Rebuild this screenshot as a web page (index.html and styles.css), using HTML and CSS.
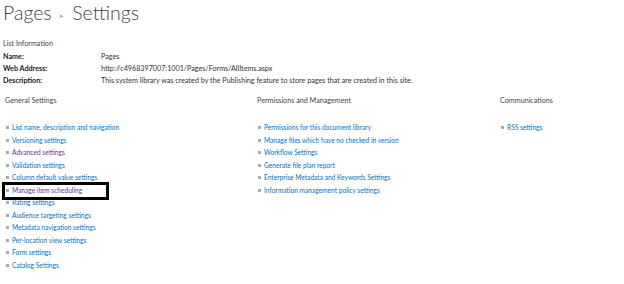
FILE: index.html
```html
<!DOCTYPE html>
<html>
<head>
   <meta charset="UTF-8">
   <title>Settings</title>
   <link rel="stylesheet" href="styles.css">
</head>
<body>
   <h1 class="title">Pages <span class="sep">&#9656;</span> Settings</h1>

   <div class="info">
      <div class="info-head">List Information</div>
      <div class="info-row"><span class="label">Name:</span><span>Pages</span></div>
      <div class="info-row"><span class="label">Web Address:</span><span>http://c4968397007:1001/Pages/Forms/AllItems.aspx</span></div>
      <div class="info-row"><span class="label">Description:</span><span>This system library was created by the Publishing feature to store pages that are created in this site.</span></div>
   </div>

   <div class="sections">
      <div class="col col1">
         <h2>General Settings</h2>
         <ul>
            <li><a href="#">List name, description and navigation</a></li>
            <li><a href="#">Versioning settings</a></li>
            <li><a href="#" class="visited">Advanced settings</a></li>
            <li><a href="#">Validation settings</a></li>
            <li><a href="#">Column default value settings</a></li>
            <li class="marked"><a href="#" class="visited">Manage item scheduling</a></li>
            <li><a href="#">Rating settings</a></li>
            <li><a href="#">Audience targeting settings</a></li>
            <li><a href="#">Metadata navigation settings</a></li>
            <li><a href="#">Per-location view settings</a></li>
            <li><a href="#">Form settings</a></li>
            <li><a href="#">Catalog Settings</a></li>
         </ul>
      </div>
      <div class="col col2">
         <h2>Permissions and Management</h2>
         <ul>
            <li><a href="#">Permissions for this document library</a></li>
            <li><a href="#">Manage files which have no checked in version</a></li>
            <li><a href="#">Workflow Settings</a></li>
            <li><a href="#">Generate file plan report</a></li>
            <li><a href="#">Enterprise Metadata and Keywords Settings</a></li>
            <li><a href="#">Information management policy settings</a></li>
         </ul>
      </div>
      <div class="col col3">
         <h2>Communications</h2>
         <ul>
            <li><a href="#">RSS settings</a></li>
         </ul>
      </div>
   </div>
</body>
</html>
```

FILE: styles.css
```css
body {
   margin: 0;
   padding: 0 3px;
   font-family: Lato, "Open Sans", sans-serif;
   font-size: 7.2px;
   color: #444;
   background: white;
}
.title {
   margin: 0;
   height: 30px;
   line-height: 26px;
   font-size: 19.5px;
   font-weight: 300;
   color: #444;
}
.sep {
   font-size: 7px;
   color: #aaa;
   vertical-align: middle;
   margin: 0 3px;
}
.info {
   margin-top: 8px;
}
.info-head {
   height: 12px;
   line-height: 12px;
   margin-bottom: 1px;
}
.info-row {
   display: flex;
   height: 12px;
   line-height: 12px;
   color: #333;
}
.label {
   width: 98px;
   font-weight: bold;
   color: #222;
}
.sections {
   display: flex;
   margin-top: 8px;
}
.col1 {
   width: 252px;
   padding-left: 2px;
}
.col2 {
   width: 243px;
}
.col h2 {
   margin: 0;
   font-size: 7.2px;
   font-weight: normal;
   color: #444;
   height: 12px;
   line-height: 12px;
}
ul {
   list-style: none;
   margin: 14px 0 0 0;
   padding: 0;
   font-size: 6.6px;
}
li {
   height: 12.5px;
   line-height: 12.5px;
   white-space: nowrap;
}
li:before {
   content: "";
   display: inline-block;
   width: 3px;
   height: 3px;
   background: #aaa;
   margin: 0 3px 1px 1px;
   vertical-align: middle;
}
a {
   text-decoration: none;
   color: #0072c6;
}
a.visited {
   color: #663399;
}
.marked {
   position: relative;
}
.marked:after {
   content: "";
   position: absolute;
   left: -3px;
   top: -2px;
   width: 101px;
   height: 12px;
   border: 3px solid black;
}
```
